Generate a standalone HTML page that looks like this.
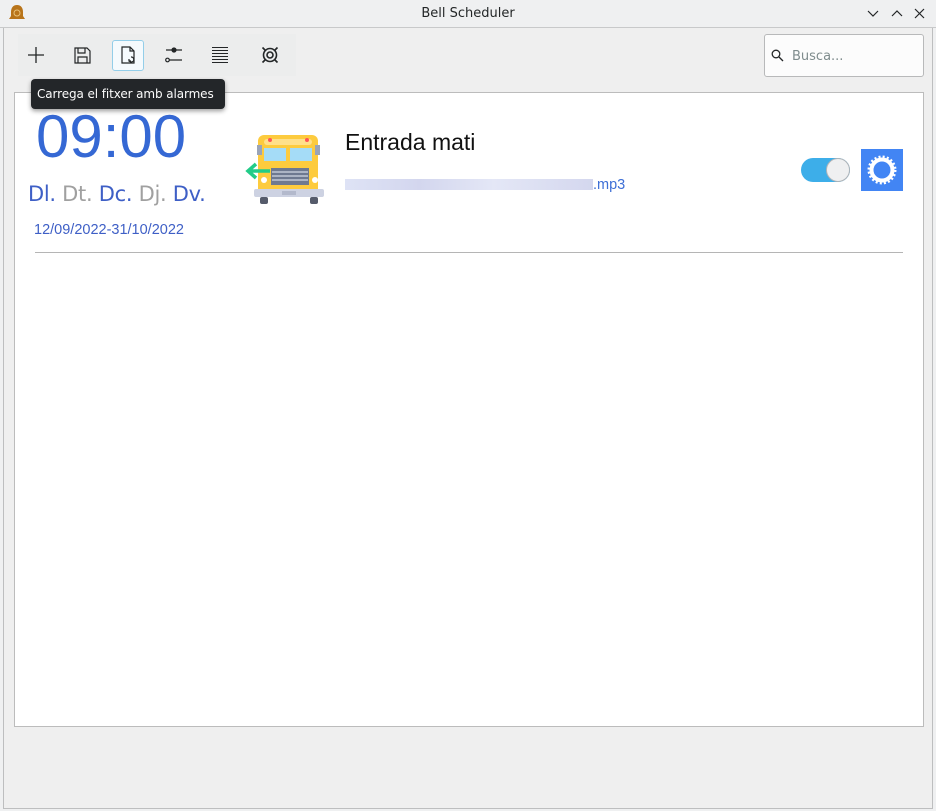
<!DOCTYPE html>
<html><head><meta charset="utf-8"><style>
*{margin:0;padding:0;box-sizing:border-box}
body{width:936px;height:811px;background:#eff0f1;font-family:"Liberation Sans",sans-serif;position:relative;overflow:hidden}
.abs{position:absolute}
.title{left:0;top:0;width:936px;height:28px;background:#eff0f1;border-bottom:1px solid #c8c9ca;text-align:center;font-size:13px;line-height:28px;color:#232627;font-family:"DejaVu Sans",sans-serif}
.win{left:3px;top:28px;width:930px;height:781px;border:1px solid #bdbebf;border-top:none;background:#efefef}
.panel{left:14px;top:92px;width:910px;height:635px;background:#fff;border:1px solid #bcbcbc}
.tb{top:39px;width:32px;height:32px}
.tip{left:31px;top:79px;width:194px;height:30px;background:#232629;border-radius:4px;color:#fcfcfc;font-family:"DejaVu Sans",sans-serif;font-size:12px;line-height:30px;padding-left:6px;box-shadow:0 2px 5px rgba(0,0,0,.4);white-space:nowrap;letter-spacing:-0.1px}
.search{left:764px;top:34px;width:160px;height:43px;background:#fcfcfc;border:1px solid #b8b9ba;border-radius:3px;font-family:"DejaVu Sans",sans-serif;font-size:13px;color:#7f8c8d;line-height:43px;padding-left:27px}
</style></head><body>
<div class="abs title">Bell Scheduler</div>
<svg class="abs" style="left:8px;top:4px" width="18" height="18" viewBox="0 0 18 18"><path d="M9 1c4 0 6 3 6 7v4l2 3H1l2-3V8c0-4 2-7 6-7z" fill="#b8741a"/><circle cx="9" cy="9" r="3" fill="none" stroke="#e8c27a" stroke-width="1"/></svg>
<svg class="abs" style="left:866px;top:8px" width="62" height="12" viewBox="0 0 62 12" fill="none" stroke="#232627" stroke-width="1.2"><path d="M2 3l5 5 5-5"/><path d="M26 8l5-5 5 5"/><path d="M49 1l9 9M58 1l-9 9"/></svg>
<div class="abs win"></div>
<div class="abs" style="left:18px;top:34px;width:278px;height:42px;background:#eceded"></div>
<svg class="abs tb" style="left:20px" viewBox="0 0 32 32"><path d="M16 8v16M8 16h16" stroke="#232627" stroke-width="1.3"/></svg>
<svg class="abs tb" style="left:66px" viewBox="0 0 32 32" fill="none" stroke="#232627" stroke-width="1.2"><path d="M9 9h12l3 3v12H9z"/><path d="M12 9v5h7V9M12 24v-6h9v6"/></svg>
<div class="abs" style="left:112px;top:40px;width:32px;height:31px;border:1px solid #93cee9;border-radius:3px;background:#f5fafd"></div>
<svg class="abs tb" style="left:112px" viewBox="0 0 32 32" fill="none" stroke="#232627" stroke-width="1.2"><path d="M10 8h8l4 4v12H10z M18 8v4h4"/><path d="M19 18a2.5 2.5 0 1 1-2 3.5M17 20v2h2" /></svg>
<svg class="abs tb" style="left:158px" viewBox="0 0 32 32" fill="none" stroke="#232627" stroke-width="1.2"><path d="M8 11h16M11 21h13"/><circle cx="16" cy="11" r="2" fill="#232627"/><circle cx="9.5" cy="21" r="1.8"/></svg>
<svg class="abs tb" style="left:204px" viewBox="0 0 32 32" stroke="#232627" stroke-width="1.1"><path d="M8 8.5h16M8 11.5h16M8 14.5h16M8 17.5h16M8 20.5h16M8 23.5h16"/></svg>
<svg class="abs tb" style="left:254px" viewBox="0 0 32 32" fill="none" stroke="#232627" stroke-width="1.6"><circle cx="16" cy="16" r="6.5"/><circle cx="16" cy="16" r="3"/><path d="M11 11l-2.5-2.5M21 11l2.5-2.5M11 21l-2.5 2.5M21 21l2.5 2.5"/></svg>
<div class="abs search">Busca...</div>
<svg class="abs" style="left:771px;top:49px" width="13" height="13" viewBox="0 0 13 13" fill="none" stroke="#232627" stroke-width="1.3"><circle cx="5" cy="5" r="3.8"/><path d="M8 8l4 4"/></svg>
<div class="abs panel"></div>
<div class="abs" style="left:36px;top:100px;font-family:'Liberation Sans',sans-serif;font-size:60px;color:#3568d4;line-height:74px">09:00</div>
<div class="abs" style="left:28px;top:182px;font-family:'DejaVu Sans',sans-serif;font-size:21px;letter-spacing:-0.3px;color:#3e5fc6;white-space:nowrap">Dl. <span style="color:#a0a0a0">Dt.</span> Dc. <span style="color:#a0a0a0">Dj.</span> Dv.</div>
<div class="abs" style="left:34px;top:222px;font-size:14.5px;color:#3e5fc6">12/09/2022-31/10/2022</div>
<div class="abs tip">Carrega el fitxer amb alarmes</div>
<svg class="abs" style="left:244px;top:133px" width="82" height="74" viewBox="0 0 82 74"><rect x="14" y="2" width="60" height="62" rx="6" fill="#fdcb3e"/><rect x="20" y="6" width="48" height="6" rx="3" fill="#ffe08a"/><circle cx="26" cy="7" r="2" fill="#f55"/><circle cx="63" cy="7" r="2" fill="#f55"/><rect x="20" y="15" width="22" height="13" fill="#a5dcf7"/><rect x="46" y="15" width="22" height="13" fill="#a5dcf7"/><rect x="13" y="12" width="5" height="10" fill="#9aa4b8"/><rect x="71" y="12" width="5" height="10" fill="#9aa4b8"/><rect x="27" y="35" width="38" height="17" fill="#6e7990"/><path d="M28 39h36M28 43h36M28 47h36" stroke="#c0c7d6" stroke-width="1.5"/><circle cx="20" cy="47" r="3" fill="#fff"/><circle cx="71" cy="47" r="3" fill="#fff"/><rect x="10" y="56" width="70" height="8" rx="2" fill="#cdd2e2"/><rect x="38" y="58" width="14" height="4" fill="#b3b9cc"/><rect x="16" y="64" width="8" height="7" rx="2" fill="#555b6b"/><rect x="66" y="64" width="8" height="7" rx="2" fill="#555b6b"/><path d="M12 31l-8 7 8 7M4 38h22" fill="none" stroke="#22cc88" stroke-width="3.5"/></svg>
<div class="abs" style="left:345px;top:129px;font-size:23px;color:#111">Entrada mati</div>
<div class="abs" style="left:345px;top:179px;width:248px;height:11px;background:linear-gradient(90deg,#d6dcf3,#c8ccea 30%,#dde1f4 60%,#c9cdea);opacity:.8"></div>
<div class="abs" style="left:593px;top:177px;font-size:14.5px;color:#3e6fd6">.mp3</div>
<div class="abs" style="left:801px;top:158px;width:49px;height:24px;border-radius:12px;background:#3daee9"></div>
<div class="abs" style="left:826px;top:158px;width:24px;height:24px;border-radius:12px;background:#eff0f1;border:1px solid #b0b4b8"></div>
<div class="abs" style="left:861px;top:149px;width:42px;height:42px;background:#4285f4"></div>
<svg class="abs" style="left:861px;top:149px" width="42" height="42" viewBox="0 0 42 42"><circle cx="21" cy="21" r="13" fill="none" stroke="#fff" stroke-width="3" stroke-dasharray="2 2.1"/><circle cx="21" cy="21" r="10.5" fill="none" stroke="#fff" stroke-width="4"/></svg>
<div class="abs" style="left:35px;top:252px;width:868px;height:1px;background:#b5b5b5"></div>
</body></html>
